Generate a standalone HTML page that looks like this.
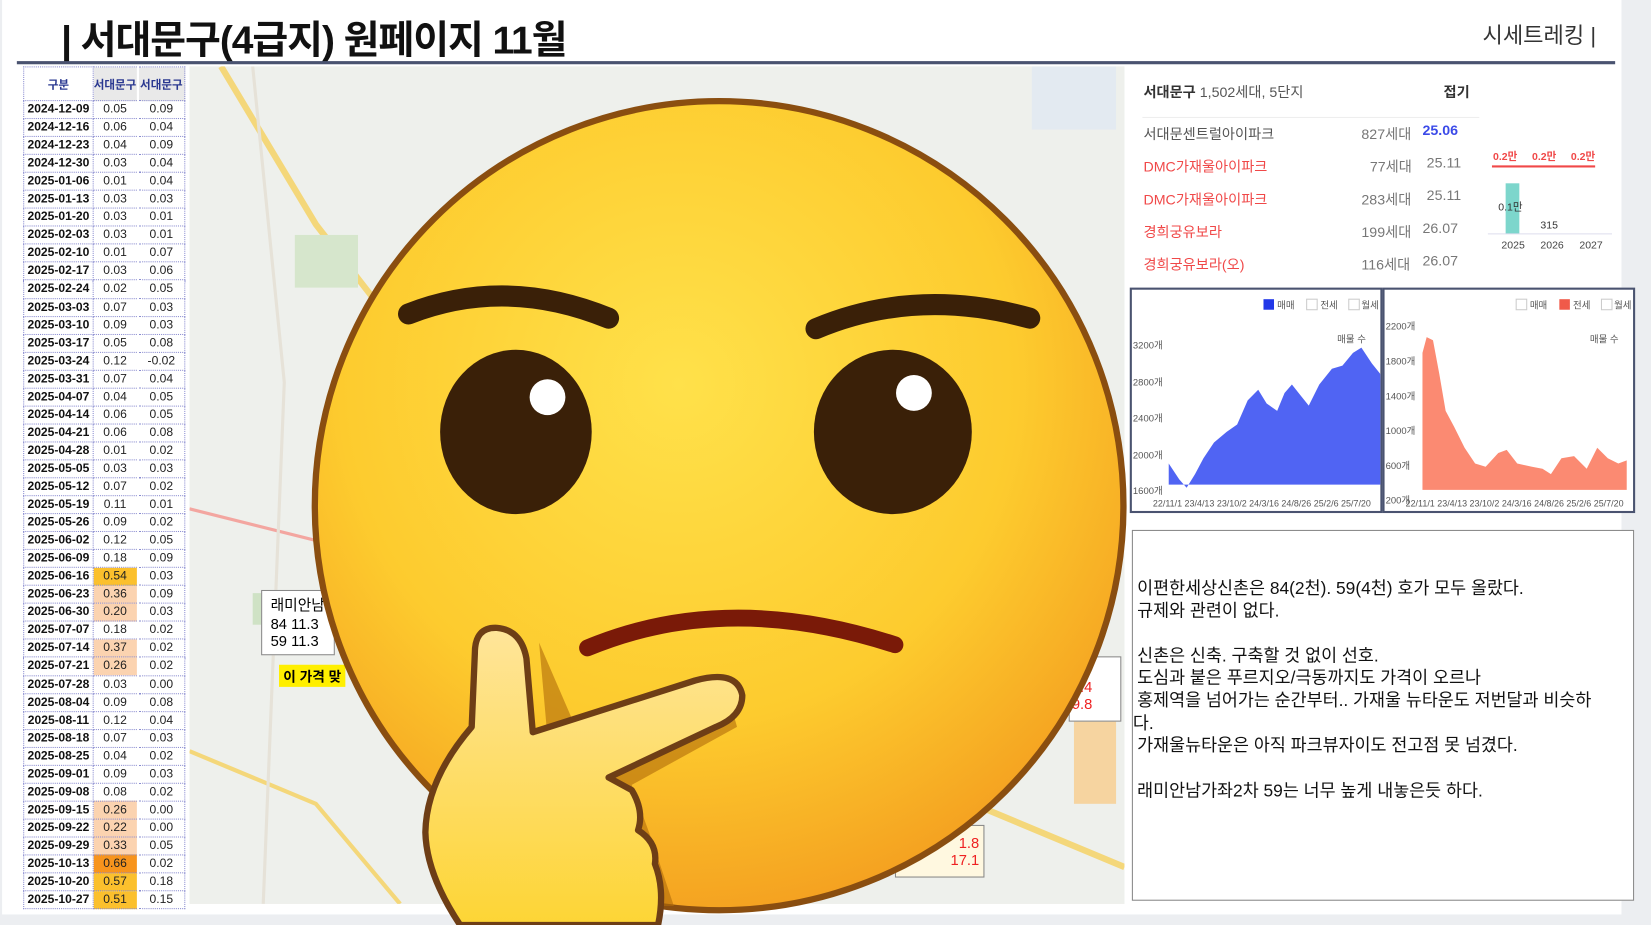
<!DOCTYPE html>
<html><head><meta charset="utf-8"><style>
*{margin:0;padding:0;box-sizing:border-box}
body{width:1651px;height:925px;overflow:hidden;background:#eceef1;font-family:"Liberation Sans","Noto Sans CJK KR",sans-serif}
#w{position:absolute;left:0;top:0;width:1568px;height:878px;transform:scale(1.0529,1.0535);transform-origin:0 0}
.pg{position:absolute;left:2px;top:0;width:1538px;height:868px;background:#fff}
.ttl{position:absolute;left:58px;top:8px;font-size:37px;font-weight:bold;color:#111;letter-spacing:-1px}
.tr{position:absolute;left:1408px;top:18px;font-size:21px;color:#333}
.hl{position:absolute;left:16px;top:58px;width:1518px;height:3px;background:#4a5370}
table{position:absolute;left:22px;top:63px;border-collapse:collapse;font-size:11.5px}
td{height:17.05px;border:1px dotted #8a8cd0;text-align:center;padding:0}
td:first-child{width:66px;font-weight:bold;color:#111}
td:nth-child(2){width:42px;color:#222}
td:nth-child(3){width:45px;color:#222;border-left:2px solid #fff}
tr.h td{height:32px;font-weight:bold;color:#2a3890;background:#e9e9e9;font-size:11px}
tr.h td:first-child{background:#fff}
.y{background:#fbc02d}.p{background:#fbd3b0}.o{background:#f7941d}
.map{position:absolute;left:180px;top:63px;width:888px;height:795px;background:#eef0ec}
.info{position:absolute;left:1073px;top:63px;width:340px}
.info div{position:absolute;font-size:13.5px;white-space:nowrap}
.box{position:absolute;background:#fff;border:2px solid #4a5370}
.txt{position:absolute;left:1075px;top:503px;width:477px;height:352px;border:1px solid #888;background:#fff;font-size:16.5px;line-height:21.3px;color:#111;padding:45px 0 0 4px}
</style></head><body><div id="w">
<div class="pg"></div>
<div class="ttl">| 서대문구(4급지) 원페이지 11월</div>
<div class="tr">시세트레킹 |</div>
<div class="hl"></div>
<table>
<tr class="h"><td>구분</td><td>서대문구</td><td>서대문구</td></tr>
<tr><td>2024-12-09</td><td>0.05</td><td>0.09</td></tr>
<tr><td>2024-12-16</td><td>0.06</td><td>0.04</td></tr>
<tr><td>2024-12-23</td><td>0.04</td><td>0.09</td></tr>
<tr><td>2024-12-30</td><td>0.03</td><td>0.04</td></tr>
<tr><td>2025-01-06</td><td>0.01</td><td>0.04</td></tr>
<tr><td>2025-01-13</td><td>0.03</td><td>0.03</td></tr>
<tr><td>2025-01-20</td><td>0.03</td><td>0.01</td></tr>
<tr><td>2025-02-03</td><td>0.03</td><td>0.01</td></tr>
<tr><td>2025-02-10</td><td>0.01</td><td>0.07</td></tr>
<tr><td>2025-02-17</td><td>0.03</td><td>0.06</td></tr>
<tr><td>2025-02-24</td><td>0.02</td><td>0.05</td></tr>
<tr><td>2025-03-03</td><td>0.07</td><td>0.03</td></tr>
<tr><td>2025-03-10</td><td>0.09</td><td>0.03</td></tr>
<tr><td>2025-03-17</td><td>0.05</td><td>0.08</td></tr>
<tr><td>2025-03-24</td><td>0.12</td><td>-0.02</td></tr>
<tr><td>2025-03-31</td><td>0.07</td><td>0.04</td></tr>
<tr><td>2025-04-07</td><td>0.04</td><td>0.05</td></tr>
<tr><td>2025-04-14</td><td>0.06</td><td>0.05</td></tr>
<tr><td>2025-04-21</td><td>0.06</td><td>0.08</td></tr>
<tr><td>2025-04-28</td><td>0.01</td><td>0.02</td></tr>
<tr><td>2025-05-05</td><td>0.03</td><td>0.03</td></tr>
<tr><td>2025-05-12</td><td>0.07</td><td>0.02</td></tr>
<tr><td>2025-05-19</td><td>0.11</td><td>0.01</td></tr>
<tr><td>2025-05-26</td><td>0.09</td><td>0.02</td></tr>
<tr><td>2025-06-02</td><td>0.12</td><td>0.05</td></tr>
<tr><td>2025-06-09</td><td>0.18</td><td>0.09</td></tr>
<tr><td>2025-06-16</td><td class="y">0.54</td><td>0.03</td></tr>
<tr><td>2025-06-23</td><td class="p">0.36</td><td>0.09</td></tr>
<tr><td>2025-06-30</td><td class="p">0.20</td><td>0.03</td></tr>
<tr><td>2025-07-07</td><td>0.18</td><td>0.02</td></tr>
<tr><td>2025-07-14</td><td class="p">0.37</td><td>0.02</td></tr>
<tr><td>2025-07-21</td><td class="p">0.26</td><td>0.02</td></tr>
<tr><td>2025-07-28</td><td>0.03</td><td>0.00</td></tr>
<tr><td>2025-08-04</td><td>0.09</td><td>0.08</td></tr>
<tr><td>2025-08-11</td><td>0.12</td><td>0.04</td></tr>
<tr><td>2025-08-18</td><td>0.07</td><td>0.03</td></tr>
<tr><td>2025-08-25</td><td>0.04</td><td>0.02</td></tr>
<tr><td>2025-09-01</td><td>0.09</td><td>0.03</td></tr>
<tr><td>2025-09-08</td><td>0.08</td><td>0.02</td></tr>
<tr><td>2025-09-15</td><td class="p">0.26</td><td>0.00</td></tr>
<tr><td>2025-09-22</td><td class="p">0.22</td><td>0.00</td></tr>
<tr><td>2025-09-29</td><td class="p">0.33</td><td>0.05</td></tr>
<tr><td>2025-10-13</td><td class="o">0.66</td><td>0.02</td></tr>
<tr><td>2025-10-20</td><td class="y">0.57</td><td>0.18</td></tr>
<tr><td>2025-10-27</td><td class="y">0.51</td><td>0.15</td></tr>
</table>
<div class="map">
<svg width="888" height="795" style="position:absolute;left:0;top:0">
<rect x="0" y="0" width="888" height="795" fill="#eef0ec"/>
<path d="M30 0 L120 150 L260 330 L420 480 L600 640 L888 760" stroke="#f4d77a" stroke-width="6" fill="none"/>
<path d="M0 420 L200 470 L330 560" stroke="#f3a6a0" stroke-width="3" fill="none"/>
<path d="M0 650 L120 700 L200 795" stroke="#f4d77a" stroke-width="4" fill="none"/>
<path d="M60 0 L90 300 L70 795" stroke="#e6e2d8" stroke-width="3" fill="none"/>
<rect x="60" y="500" width="50" height="30" fill="#cfe2c5"/>
<rect x="100" y="160" width="60" height="50" fill="#d6e6cc"/>
<rect x="840" y="620" width="40" height="80" fill="#f6d4a0"/>
<rect x="800" y="0" width="80" height="60" fill="#e3eaf1"/>
</svg>
<div style="position:absolute;left:68px;top:497px;width:70px;height:62px;background:#fff;border:1px solid #888;font-size:14px;padding:3px 8px">래미안남<br>84 11.3<br>59 11.3</div>
<div style="position:absolute;left:85px;top:568px;background:#ffef00;font-size:13px;font-weight:bold;padding:1px 4px">이 가격 맞</div>
<div style="position:absolute;left:835px;top:560px;width:50px;height:62px;background:#fff;border:1px solid #888;font-size:14px;color:#e22;padding:20px 2px">2.4<br>9.8</div>
<div style="position:absolute;left:670px;top:720px;width:85px;height:50px;background:#fff8e0;border:1px solid #888;font-size:14px;color:#e22;padding:8px 4px;text-align:right">1.8<br>17.1</div>
</div>
<div class="info">
<div style="left:13px;top:13px;font-weight:bold;color:#333">서대문구 <span style="font-weight:normal;color:#555">1,502세대, 5단지</span></div>
<div style="left:298px;top:13px;font-weight:bold;color:#333">접기</div>
<div style="left:12px;top:48px;width:320px;height:1px;background:#eee"></div>
<div style="left:13px;top:53px;color:#555">서대문센트럴아이파크</div><div style="left:220px;top:53px;color:#777">827세대</div><div style="left:278px;top:53px;color:#3b4ae8;font-weight:bold">25.06</div>
<div style="left:13px;top:84px;color:#f04848">DMC가재울아이파크</div><div style="left:228px;top:84px;color:#777">77세대</div><div style="left:282px;top:84px;color:#777">25.11</div>
<div style="left:13px;top:115px;color:#f04848">DMC가재울아이파크</div><div style="left:220px;top:115px;color:#777">283세대</div><div style="left:282px;top:115px;color:#777">25.11</div>
<div style="left:13px;top:146px;color:#f04848">경희궁유보라</div><div style="left:220px;top:146px;color:#777">199세대</div><div style="left:278px;top:146px;color:#777">26.07</div>
<div style="left:13px;top:177px;color:#f04848">경희궁유보라(오)</div><div style="left:220px;top:177px;color:#777">116세대</div><div style="left:278px;top:177px;color:#777">26.07</div>
</div>
<svg style="position:absolute;left:1413px;top:140px" width="125" height="100">
<text x="5" y="12" font-size="10" fill="#f04848" font-weight="bold">0.2만</text><text x="42" y="12" font-size="10" fill="#f04848" font-weight="bold">0.2만</text><text x="79" y="12" font-size="10" fill="#f04848" font-weight="bold">0.2만</text>
<line x1="4" y1="18" x2="102" y2="18" stroke="#f04848" stroke-width="2"/>
<rect x="17" y="34" width="13" height="48" fill="#7dd6cc"/>
<text x="10" y="60" font-size="10" fill="#333">0.1만</text><text x="50" y="77" font-size="10" fill="#333">315</text>
<line x1="0" y1="82" x2="118" y2="82" stroke="#dde"/>
<text x="13" y="96" font-size="10" fill="#444">2025</text><text x="50" y="96" font-size="10" fill="#444">2026</text><text x="87" y="96" font-size="10" fill="#444">2027</text>
</svg>
<div class="box" style="left:1073px;top:273px;width:240px;height:214px">
<svg width="236" height="210" font-size="9" fill="#555">
<rect x="125" y="9" width="10" height="10" fill="#2238e8"/><text x="138" y="18">매매</text><rect x="166" y="9" width="10" height="10" fill="#fff" stroke="#ccc"/><text x="179" y="18">전세</text><rect x="206" y="9" width="10" height="10" fill="#fff" stroke="#ccc"/><text x="218" y="18">월세</text>
<text x="195" y="50">매물 수</text>
<text x="1" y="56">3200개</text><text x="1" y="91">2800개</text><text x="1" y="125">2400개</text><text x="1" y="160">2000개</text><text x="1" y="194">1600개</text>
<path d="M35 165 L45 180 L52 188 L60 175 L68 160 L78 145 L90 135 L100 128 L110 105 L120 95 L128 108 L138 115 L145 98 L152 90 L160 100 L168 110 L178 90 L190 75 L200 72 L210 60 L218 55 L228 70 L236 80 L238 185 L35 185Z" fill="#5064f3"/>
<text x="20" y="206" font-size="8.5">22/11/1 23/4/13 23/10/2 24/3/16 24/8/26 25/2/6 25/7/20</text>
</svg></div>
<div class="box" style="left:1313px;top:273px;width:240px;height:214px">
<svg width="236" height="210" font-size="9" fill="#555">
<rect x="125" y="9" width="10" height="10" fill="#fff" stroke="#ccc"/><text x="138" y="18">매매</text><rect x="166" y="9" width="10" height="10" fill="#f05a4a"/><text x="179" y="18">전세</text><rect x="206" y="9" width="10" height="10" fill="#fff" stroke="#ccc"/><text x="218" y="18">월세</text>
<text x="195" y="50">매물 수</text>
<text x="1" y="38">2200개</text><text x="1" y="71">1800개</text><text x="1" y="104">1400개</text><text x="1" y="137">1000개</text><text x="1" y="170">600개</text><text x="1" y="203">200개</text>
<path d="M36 60 L40 45 L46 48 L52 80 L58 115 L66 130 L76 150 L86 165 L96 168 L108 155 L116 152 L126 165 L140 168 L150 170 L158 175 L168 160 L180 158 L192 170 L202 150 L212 160 L222 165 L230 162 L230 190 L36 190Z" fill="#fb8a72"/>
<text x="20" y="206" font-size="8.5">22/11/1 23/4/13 23/10/2 24/3/16 24/8/26 25/2/6 25/7/20</text>
</svg></div>
<div class="txt">이편한세상신촌은 84(2천). 59(4천) 호가 모두 올랐다.<br>규제와 관련이 없다.<br><br>신촌은 신축. 구축할 것 없이 선호.<br>도심과 붙은 푸르지오/극동까지도 가격이 오르나<br>홍제역을 넘어가는 순간부터.. 가재울 뉴타운도 저번달과 비슷하<br><span style="margin-left:-4px">다.</span><br>가재울뉴타운은 아직 파크뷰자이도 전고점 못 넘겼다.<br><br>래미안남가좌2차 59는 너무 높게 내놓은듯 하다.</div>
<svg style="position:absolute;left:0;top:0" width="1568" height="878">
<defs><radialGradient id="g" cx="0.45" cy="0.35" r="0.7"><stop offset="0" stop-color="#ffe14a"/><stop offset="0.6" stop-color="#fdcb2e"/><stop offset="1" stop-color="#f39a1e"/></radialGradient>
<linearGradient id="h" x1="0" y1="0" x2="0" y2="1"><stop offset="0" stop-color="#ffe59a"/><stop offset="1" stop-color="#fdd535"/></linearGradient></defs>
<circle cx="683" cy="480" r="384" fill="url(#g)" stroke="#8a4e10" stroke-width="6"/>
<path d="M388 298 Q480 262 578 302" stroke="#3a2008" stroke-width="20" fill="none" stroke-linecap="round"/>
<path d="M775 312 Q870 272 978 302" stroke="#3a2008" stroke-width="20" fill="none" stroke-linecap="round"/>
<ellipse cx="490" cy="410" rx="72" ry="78" fill="#3a2008"/><circle cx="520" cy="377" r="17" fill="#fff"/>
<ellipse cx="848" cy="410" rx="75" ry="78" fill="#3a2008"/><circle cx="868" cy="373" r="17" fill="#fff"/>
<path d="M558 615 Q690 560 850 612" stroke="#7a1a08" stroke-width="16" fill="none" stroke-linecap="round"/>
<path d="M512 610 L520 700 L690 655 L700 690 L600 745 L620 800 L640 860 L620 860 Z" fill="#b06a0a" opacity="0.6"/>
<path d="M451 620 Q451 595 472 596 Q495 598 500 625 L506 695 L660 646 Q700 635 705 660 Q705 680 680 690 L578 738 L600 750 Q612 770 606 788 Q625 800 622 820 Q632 845 625 878 L437 878 Q405 830 404 790 Q405 740 448 690 Z" fill="url(#h)" stroke="#6e3e16" stroke-width="6" stroke-linejoin="round"/>
</svg>
</div></body></html>
